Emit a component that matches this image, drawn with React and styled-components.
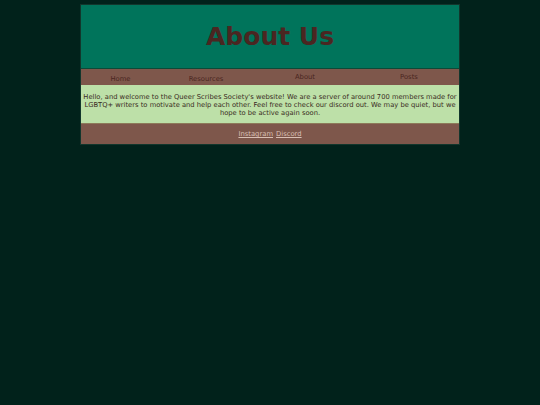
import styled, { createGlobalStyle } from "styled-components";

const GlobalStyle = createGlobalStyle`
  html, body {
    margin: 0;
    padding: 0;
    background: #01221b;
    font-family: "DejaVu Sans", sans-serif;
  }
`;

const Page = styled.div`
  width: 380px;
  margin: 4px auto 0 auto;
  border: 1px solid #12362c;
  box-sizing: border-box;
`;

const Header = styled.header`
  height: 63px;
  background: #00745b;
  display: flex;
  align-items: center;
  justify-content: center;
  border-bottom: 1px solid #0c4a38;
`;

const Title = styled.h1`
  margin: 0;
  font-size: 25px;
  font-weight: bold;
  color: #4a2621;
`;

const Nav = styled.nav`
  height: 16px;
  background: #7e574b;
  display: grid;
  grid-template-columns: 79px 92px 106px 102px;
`;

const NavItem = styled.span`
  font-size: 6.8px;
  line-height: 8px;
  color: #4a2621;
  text-align: center;
  padding-top: ${(p) => (p.$raised ? "4px" : "6px")};
`;

const About = styled.section`
  background: #bde0a8;
  padding: 8px 0 6px 0;
  text-align: center;
  font-size: 6.75px;
  line-height: 8px;
  color: #3a2b22;
  border-bottom: 1px solid #8d7a5a;
`;

const Footer = styled.footer`
  height: 20px;
  background: #7e574b;
  display: flex;
  justify-content: center;
  align-items: center;
  gap: 3px;
`;

const Link = styled.a`
  font-size: 6.8px;
  color: #d9bfb4;
  text-decoration: underline;
`;

function App() {
  return (
    <>
      <GlobalStyle />
      <Page>
        <Header>
          <Title>About Us</Title>
        </Header>
        <Nav>
          <NavItem>Home</NavItem>
          <NavItem>Resources</NavItem>
          <NavItem $raised>About</NavItem>
          <NavItem $raised>Posts</NavItem>
        </Nav>
        <About>
          Hello, and welcome to the Queer Scribes Society's website! We are a
          server of around 700 members made for LGBTQ+ writers to motivate and
          help each other. Feel free to check our discord out. We may be quiet,
          but we hope to be active again soon.
        </About>
        <Footer>
          <Link href="#">Instagram</Link>
          <Link href="#">Discord</Link>
        </Footer>
      </Page>
    </>
  );
}

export default App;
